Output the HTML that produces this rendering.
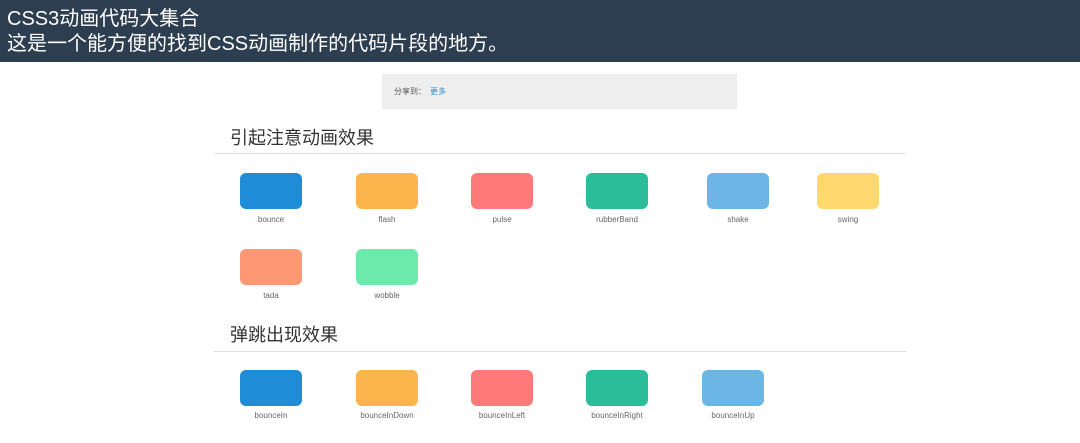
<!DOCTYPE html>
<html><head><meta charset="utf-8"><style>
body{margin:0;width:1080px;height:443px;overflow:hidden;background:#fff;font-family:"Liberation Sans","Noto Sans CJK SC",sans-serif;position:relative}
.hd{position:absolute;left:0;top:0;width:1080px;height:62px;background:#2d3e50;color:#fff;font-size:20px;line-height:25px;padding-top:7px;padding-left:7px;box-sizing:border-box}
.share{position:absolute;left:382px;top:74px;width:355px;height:35px;background:#eee;font-size:8px;color:#555;line-height:35px;padding-left:12px;box-sizing:border-box}
.share span{color:#2a8ad4;margin-left:4px}
h2{position:absolute;left:230px;margin:0;font-size:18px;font-weight:normal;color:#333;line-height:22px}
.ln{position:absolute;left:214px;width:692px;height:1px;background:#ddd}
.b{position:absolute;width:62px;height:36px;border-radius:6px}
.l{position:absolute;width:100px;text-align:center;font-size:8px;color:#666}
</style></head><body>
<div class="hd">CSS3动画代码大集合<br>这是一个能方便的找到CSS动画制作的代码片段的地方。</div>
<div class="share">分享到：<span>更多</span></div>
<h2 style="top:127px">引起注意动画效果</h2><div class="ln" style="top:153px"></div>
<h2 style="top:324px">弹跳出现效果</h2><div class="ln" style="top:351px"></div>

<div class="b" style="left:240px;top:173px;background:#1e8cd6"></div><div class="l" style="left:221px;top:215px">bounce</div>
<div class="b" style="left:356px;top:173px;background:#fcb44c"></div><div class="l" style="left:337px;top:215px">flash</div>
<div class="b" style="left:471px;top:173px;background:#fe7979"></div><div class="l" style="left:452px;top:215px">pulse</div>
<div class="b" style="left:586px;top:173px;background:#2bbd99"></div><div class="l" style="left:567px;top:215px">rubberBand</div>
<div class="b" style="left:707px;top:173px;background:#6cb6e6"></div><div class="l" style="left:688px;top:215px">shake</div>
<div class="b" style="left:817px;top:173px;background:#ffd970"></div><div class="l" style="left:798px;top:215px">swing</div>

<div class="b" style="left:240px;top:249px;background:#fe9774"></div><div class="l" style="left:221px;top:291px">tada</div>
<div class="b" style="left:356px;top:249px;background:#6beaac"></div><div class="l" style="left:337px;top:291px">wobble</div>

<div class="b" style="left:240px;top:370px;background:#1e8cd6"></div><div class="l" style="left:221px;top:411px">bounceIn</div>
<div class="b" style="left:356px;top:370px;background:#fcb44c"></div><div class="l" style="left:337px;top:411px">bounceInDown</div>
<div class="b" style="left:471px;top:370px;background:#fe7979"></div><div class="l" style="left:452px;top:411px">bounceInLeft</div>
<div class="b" style="left:586px;top:370px;background:#2bbd99"></div><div class="l" style="left:567px;top:411px">bounceInRight</div>
<div class="b" style="left:702px;top:370px;background:#6cb6e6"></div><div class="l" style="left:683px;top:411px">bounceInUp</div>
</body></html>
